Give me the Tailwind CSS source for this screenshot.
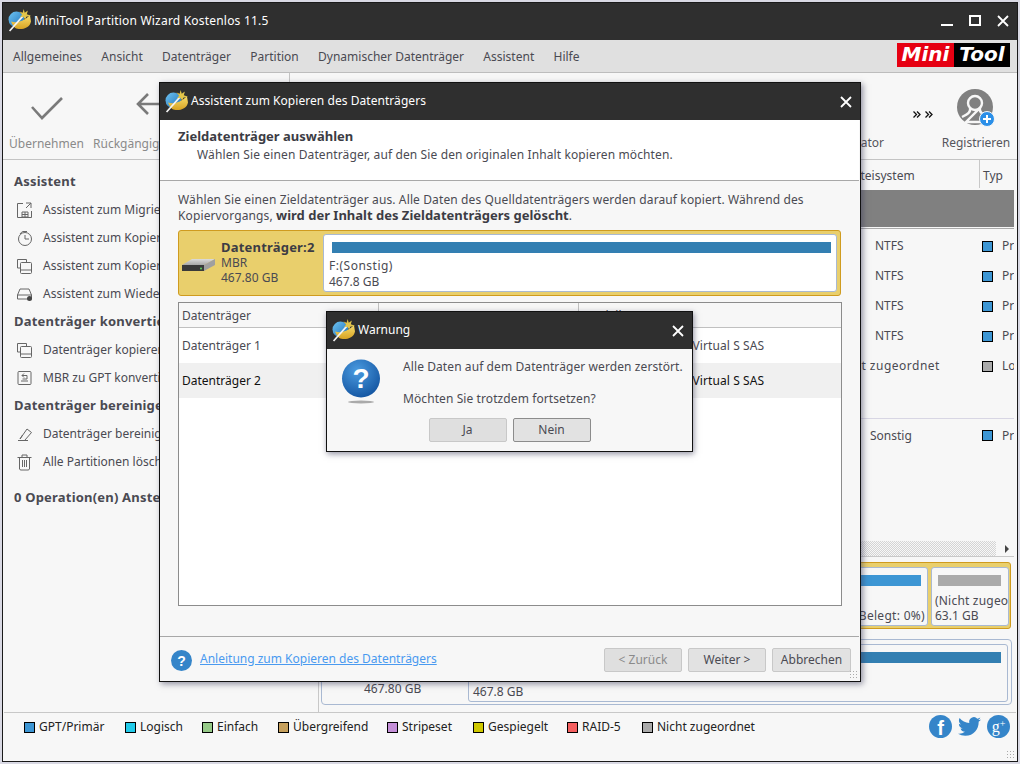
<!DOCTYPE html>
<html lang="de">
<head>
  <meta charset="UTF-8">
  <title>MiniTool Partition Wizard</title>
  <script src="https://cdn.jsdelivr.net/npm/@tailwindcss/browser@4"></script>
</head>
<body class="w-[1020px] h-[764px] overflow-hidden bg-[#d9d9e4] font-['Noto_Sans',sans-serif] text-[12px] text-[#4a4a52]">

  <svg class="absolute w-0 h-0">
    <defs>
      <linearGradient id="ball" x1="0" y1="0" x2="1" y2="1"><stop offset="0" stop-color="#6fc4f2"/><stop offset="1" stop-color="#1c6fb8"/></linearGradient>
      <linearGradient id="bowl" x1="0" y1="0" x2="0" y2="1"><stop offset="0" stop-color="#f8dd6c"/><stop offset="1" stop-color="#d6a222"/></linearGradient>
      <radialGradient id="qball" cx="0.4" cy="0.3" r="0.8"><stop offset="0" stop-color="#4a9be0"/><stop offset="1" stop-color="#0f4f9c"/></radialGradient>
      <linearGradient id="hdd" x1="0" y1="0" x2="0" y2="1"><stop offset="0" stop-color="#dcdcdc"/><stop offset="1" stop-color="#a8a8a8"/></linearGradient>
      <symbol id="app" viewBox="0 0 22 22">
        <circle cx="8" cy="10" r="7.500" fill="url(#ball)"/>
        <path d="M3 12 C8 14 15 12 21 6 L22 12 C21 18 14 20 9 19 C6 18.500 4 15 3 12Z" fill="url(#bowl)"/>
        <path d="M1.500 21 L14 7" stroke="#f4f4f4" stroke-width="1.600"/>
        <path d="M15 0 L16 3.500 L19 1.500 L18 5 L22 6.500 L17.500 7.500 L16.500 10 L14.500 7.500 L11.500 8 L13.500 5.500 L11 2.500 L14 3.500Z" fill="#e2c54a"/>
      </symbol>
    </defs>
  </svg>

  <!-- main window -->
  <div class="relative ml-[2px] mt-[2px] w-[1016px] h-[760px] border border-[#1a1a1a] bg-[#f7f7f7] flex flex-col">

    <header class="h-[37px] shrink-0 bg-[#2f2f2f] flex items-center pl-[5px] text-white">
      <svg class="w-[23px] h-[23px] -mt-[2px]"><use href="#app"/></svg>
      <span class="ml-[3px] -mt-[1px] tracking-[0.2px]">MiniTool Partition Wizard Kostenlos 11.5</span>
      <div class="ml-auto mb-[2px] flex items-center">
        <div class="w-[12px] h-[2px] bg-white mt-[8px]"></div>
        <div class="ml-[16px] w-[12px] h-[11px] border-2 border-white"></div>
        <svg class="ml-[16px] mr-[8px] w-[12px] h-[12px]" viewBox="0 0 12 12"><path d="M1 1 L11 11 M11 1 L1 11" stroke="#fff" stroke-width="1.800"/></svg>
      </div>
    </header>

    <nav class="h-[33px] shrink-0 bg-[#e0e0e0] border-b border-[#bdbdbd] flex items-center pl-[10px] gap-[19.300px] text-[#4a4a52]">
      <span class="mt-[2px]">Allgemeines</span><span class="mt-[2px]">Ansicht</span><span class="mt-[2px]">Datenträger</span><span class="mt-[2px]">Partition</span><span class="mt-[2px]">Dynamischer Datenträger</span><span class="mt-[2px]">Assistent</span><span class="mt-[2px]">Hilfe</span>
      <div class="ml-auto mr-[7px] flex h-[24px] mb-[3px] font-['DejaVu_Sans',sans-serif] font-bold italic text-[20px] leading-[23px] text-white">
        <span class="w-[57px] bg-[#e60012] text-center">Mini</span>
        <span class="w-[56px] bg-black text-center">Tool</span>
      </div>
    </nav>

    <!-- toolbar -->
    <div class="relative h-[87px] shrink-0 border-b border-[#c4c4c4] flex text-[#8a8a8a]">
      <div class="w-[85px] flex flex-col items-center pt-[23px]">
        <svg class="w-[34px] h-[24px] ml-[2px]" viewBox="0 0 34 24"><path d="M2 11 L12 22 L32 2" fill="none" stroke="#7a7a7a" stroke-width="2.600"/></svg>
        <span class="mt-[15px] ml-[2px]">Übernehmen</span>
      </div>
      <div class="w-[80px] flex flex-col pt-[19px] pl-[5px]">
        <svg class="ml-[43px] w-[26px] h-[24px]" viewBox="0 0 26 24"><path d="M12 2 L2 12 L12 22 M2 12 L26 12" fill="none" stroke="#7a7a7a" stroke-width="2.600"/></svg>
        <span class="mt-[19px] whitespace-nowrap">Rückgängig</span>
      </div>
      <div class="absolute left-[286px] top-0 h-[87px] w-px bg-[#c4c4c4]"></div>
      <div class="ml-auto flex">
        <span class="self-end mb-[7px] w-[73px] flex justify-end whitespace-nowrap text-[#55555c]">Speicherplatz-Analysator</span>
        <div class="w-[51px] pr-[2px] flex items-start justify-end gap-[4px] pt-[38px]">
          <svg class="w-[8px] h-[7px]" viewBox="0 0 8 7" fill="none" stroke="#111" stroke-width="1.300"><path d="M.500 .500L3.500 3.500L.500 6.500M4 .500L7 3.500L4 6.500"/></svg>
          <svg class="w-[8px] h-[7px]" viewBox="0 0 8 7" fill="none" stroke="#111" stroke-width="1.300"><path d="M.500 .500L3.500 3.500L.500 6.500M4 .500L7 3.500L4 6.500"/></svg>
        </div>
        <div class="w-[82px] flex flex-col items-center pt-[16px] text-[#55555c]">
          <svg class="w-[38px] h-[38px]" viewBox="0 0 38 38">
            <circle cx="18" cy="18" r="18" fill="#808080"/>
            <circle cx="18" cy="14" r="7" fill="none" stroke="#f7f7f7" stroke-width="2.400"/>
            <path d="M13 19 C14 23 11 25 5 28 M23 19 C22 23 25 25 31 28 L27 33 L9 33 Z" fill="none" stroke="#f7f7f7" stroke-width="2.400"/>
            <circle cx="30" cy="30" r="7.500" fill="#2b8fe8" stroke="#f7f7f7" stroke-width="1"/>
            <path d="M30 26 V34 M26 30 H34" stroke="#fff" stroke-width="2"/>
          </svg>
          <span class="mt-[7px]">Registrieren</span>
        </div>
      </div>
    </div>

    <div class="flex h-[552px] shrink-0">
      <!-- sidebar -->
      <aside class="w-[316px] shrink-0 border-r border-[#c8c8c8] pt-[8px] pl-[11px] overflow-hidden whitespace-nowrap">
        <div class="h-[28px] flex items-center font-bold text-[13px] tracking-[0.2px]">Assistent</div>
        <div class="h-[28px] flex items-center gap-[11px] pl-[3px]">
          <svg class="w-[15px] h-[16px]" viewBox="0 0 15 16" fill="none" stroke="#666"><path d="M6 1.500H.500V15.500H14.500V9M9 1H14V6M14 1L9 6"/><path d="M5 10h6v5H5zM8 10v5M5 12.500h6"/></svg>
          <span>Assistent zum Migrieren von OS auf SSD/HD</span>
        </div>
        <div class="h-[28px] flex items-center gap-[11px] pl-[3px]">
          <svg class="w-[15px] h-[16px]" viewBox="0 0 15 16" fill="none" stroke="#666"><circle cx="8" cy="9" r="6.500"/><path d="M8 5V9H12M3 4A6 6 0 0 1 6 1.500H10"/></svg>
          <span>Assistent zum Kopieren der Partition</span>
        </div>
        <div class="h-[28px] flex items-center gap-[11px] pl-[3px]">
          <svg class="w-[15px] h-[16px]" viewBox="0 0 15 16" fill="none" stroke="#666"><path d="M3 10H.500V1.500H9.500V4"/><rect x="3.500" y="4.500" width="11" height="11" rx="1"/><path d="M3.500 12H14.500"/></svg>
          <span>Assistent zum Kopieren des Datenträgers</span>
        </div>
        <div class="h-[28px] flex items-center gap-[11px] pl-[3px]">
          <svg class="w-[15px] h-[16px]" viewBox="0 0 15 16" fill="none" stroke="#666"><path d="M.500 9L3 3H12L14.500 9V13H.500Z M.500 9H14.500"/><circle cx="12.500" cy="12.500" r="2.500" fill="#444" stroke="none"/></svg>
          <span>Assistent zum Wiederherstellen der Partition</span>
        </div>
        <div class="h-[28px] flex items-center font-bold text-[13px] tracking-[0.2px]">Datenträger konvertieren</div>
        <div class="h-[28px] flex items-center gap-[11px] pl-[3px]">
          <svg class="w-[15px] h-[16px]" viewBox="0 0 15 16" fill="none" stroke="#666"><path d="M3 10H.500V1.500H9.500V4"/><rect x="3.500" y="4.500" width="11" height="11" rx="1"/><path d="M3.500 12H14.500"/></svg>
          <span>Datenträger kopieren</span>
        </div>
        <div class="h-[28px] flex items-center gap-[11px] pl-[3px]">
          <svg class="w-[15px] h-[16px]" viewBox="0 0 15 16" fill="none" stroke="#666"><rect x="1" y="1.500" width="13" height="13" rx="1"/><path d="M4 11H11M5 5.500H10V9H5.500M5 5.500L7 3.500M5 5.500L7 7.500"/></svg>
          <span>MBR zu GPT konvertieren</span>
        </div>
        <div class="h-[28px] flex items-center font-bold text-[13px] tracking-[0.2px]">Datenträger bereinigen</div>
        <div class="h-[28px] flex items-center gap-[11px] pl-[3px]">
          <svg class="w-[15px] h-[16px]" viewBox="0 0 15 16" fill="none" stroke="#666"><path d="M1 14.500H11M3 13L10 3L14.500 6.500L8 14M3 13L5.500 9"/></svg>
          <span>Datenträger bereinigen</span>
        </div>
        <div class="h-[28px] flex items-center gap-[11px] pl-[3px]">
          <svg class="w-[15px] h-[17px]" viewBox="0 0 15 17" fill="none" stroke="#666"><path d="M.500 3.500H14.500M5 3V1H10V3M2.500 4V15A1.500 1.500 0 0 0 4 16H11A1.500 1.500 0 0 0 12.500 15V4M5.500 6V13M7.500 6V13M9.500 6V13"/></svg>
          <span>Alle Partitionen löschen</span>
        </div>
        <div class="mt-[8px] h-[28px] flex items-center font-bold text-[13px] tracking-[0.2px]">0 Operation(en) Anstehend</div>
      </aside>

      <!-- partition list and disk map, mostly behind the dialog -->
      <main class="w-[695px] shrink-0 flex flex-col whitespace-nowrap overflow-hidden">
        <div class="h-[28px] shrink-0 flex items-center pl-[526px]">
          <span class="w-[134px] shrink-0 pt-[4px]">Dateisystem</span>
          <span class="pl-[3px] h-[28px] leading-[32px] border-l border-[#c8c8c8]">Typ</span>
        </div>
        <div class="mt-[2px] h-[37px] shrink-0 bg-[#808080]"></div>
        <div class="mt-[1px] h-[1px] shrink-0 bg-[#aaaaaa]"></div>
        <div class="mt-[2px] h-[30px] shrink-0 flex items-center pl-[556px]"><span class="w-[107px] shrink-0">NTFS</span><span class="w-[11px] h-[11px] shrink-0 bg-[#3d96d4] border border-black"></span><span class="ml-[9px]">Primär</span></div>
        <div class="h-[30px] shrink-0 flex items-center pl-[556px]"><span class="w-[107px] shrink-0">NTFS</span><span class="w-[11px] h-[11px] shrink-0 bg-[#3d96d4] border border-black"></span><span class="ml-[9px]">Primär</span></div>
        <div class="h-[30px] shrink-0 flex items-center pl-[556px]"><span class="w-[107px] shrink-0">NTFS</span><span class="w-[11px] h-[11px] shrink-0 bg-[#3d96d4] border border-black"></span><span class="ml-[9px]">Primär</span></div>
        <div class="h-[30px] shrink-0 flex items-center pl-[556px]"><span class="w-[107px] shrink-0">NTFS</span><span class="w-[11px] h-[11px] shrink-0 bg-[#3d96d4] border border-black"></span><span class="ml-[9px]">Primär</span></div>
        <div class="h-[30px] shrink-0 flex items-center pl-[515px]"><span class="w-[148px] shrink-0 tracking-[0.5px]">Nicht zugeordnet</span><span class="w-[11px] h-[11px] shrink-0 bg-[#aaaaaa] border border-black"></span><span class="ml-[9px]">Logisch</span></div>
        <div class="mt-[37px] h-[1px] shrink-0 bg-[#d8d6e4]"></div>
        <div class="h-[33px] shrink-0 flex items-center pl-[551px]"><span class="w-[112px] shrink-0">Sonstig</span><span class="w-[11px] h-[11px] shrink-0 bg-[#3d96d4] border border-black"></span><span class="ml-[9px]">Primär</span></div>
        <!-- scrollbar -->
        <div class="mt-[89px] h-[16px] shrink-0 border-b border-[#c8c8c8] flex items-center">
          <div class="w-[677px] h-[15px] shrink-0 bg-[repeating-conic-gradient(#d4d4d4_0%_25%,#f7f7f7_0%_50%)] bg-[length:2px_2px]"></div>
          <div class="ml-[9px] w-0 h-0 border-y-[4px] border-y-transparent border-l-[4px] border-l-[#444]"></div>
        </div>
        <!-- disk 1 -->
        <div class="mt-[5px] ml-[1px] w-[691px] h-[67px] shrink-0 bg-[#e9cf6c] border border-[#cf9b1f] rounded-[3px] flex pt-[4px] pb-[2px] pl-[4px] pr-[2px] gap-[3px]">
          <div class="w-[603px] shrink-0 bg-[#f7f7f7] border border-[#a9b9d2] rounded-[3px] pt-[7px] pl-[7px] pr-[6px] text-right"><div class="h-[11px] bg-[#3d96d4]"></div><div class="mt-[22px] mr-[-4px] leading-[15px] tracking-[0.3px]">(Belegt: 0%)</div></div>
          <div class="w-[78px] shrink-0 overflow-hidden bg-[#f7f7f7] border border-[#a9b9d2] rounded-[3px] pt-[7px] pl-[3px]"><div class="ml-[3px] mr-[7px] h-[11px] bg-[#aaaaaa]"></div><div class="mt-[7px] leading-[15px] tracking-[0.2px]">(Nicht zugeordnet)</div><div class="leading-[15px]">63.1 GB</div></div>
        </div>
        <!-- disk 2 -->
        <div class="mt-[10px] ml-[2px] w-[691px] h-[66px] shrink-0 border border-[#a9b9d2] rounded-[4px] flex">
          <div class="w-[146px] shrink-0 pt-[41px] pl-[42px] leading-[16px]">467.80 GB</div>
          <div class="flex-1 border border-[#a9b9d2] rounded-[3px] mt-[4px] mr-[3px] mb-[2px] pt-[7px] pl-[4px] pr-[6px]"><div class="h-[11px] bg-[#337fb2]"></div><div class="mt-[21px] leading-[16px]">467.8 GB</div></div>
        </div>
      </main>
    </div>

    <footer class="flex-1 border-t border-[#c8c8c8] mx-px pt-[7px] pl-[20px] flex items-start text-[#222]">
      <div class="w-[101px] flex items-center h-[14px]"><span class="w-[11px] h-[11px] bg-[#3d96d4] border border-black"></span><span class="ml-[4px]">GPT/Primär</span></div>
      <div class="w-[77px] flex items-center h-[14px]"><span class="w-[11px] h-[11px] bg-[#22cbea] border border-black"></span><span class="ml-[4px]">Logisch</span></div>
      <div class="w-[76px] flex items-center h-[14px]"><span class="w-[11px] h-[11px] bg-[#96ca88] border border-black"></span><span class="ml-[4px]">Einfach</span></div>
      <div class="w-[109px] flex items-center h-[14px]"><span class="w-[11px] h-[11px] bg-[#c6a05c] border border-black"></span><span class="ml-[4px]">Übergreifend</span></div>
      <div class="w-[86px] flex items-center h-[14px]"><span class="w-[11px] h-[11px] bg-[#c48fd8] border border-black"></span><span class="ml-[4px]">Stripeset</span></div>
      <div class="w-[94px] flex items-center h-[14px]"><span class="w-[11px] h-[11px] bg-[#cfc800] border border-black"></span><span class="ml-[4px]">Gespiegelt</span></div>
      <div class="w-[75px] flex items-center h-[14px]"><span class="w-[11px] h-[11px] bg-[#f56060] border border-black"></span><span class="ml-[4px]">RAID-5</span></div>
      <div class="flex items-center h-[14px]"><span class="w-[11px] h-[11px] bg-[#aaaaaa] border border-black"></span><span class="ml-[4px]">Nicht zugeordnet</span></div>
      <div class="ml-auto mr-[6px] -mt-[5px] flex items-center gap-[6px]">
        <div class="w-[23px] h-[23px] rounded-full bg-[#3585c9] flex items-center justify-center text-white font-['Liberation_Sans',sans-serif] font-bold text-[20px] leading-none pt-[3px]">f</div>
        <svg class="w-[23px] h-[23px]" viewBox="0 0 24 24"><path fill="#3585c9" d="M23.953 4.570a10 10 0 01-2.825.775 4.958 4.958 0 002.163-2.723c-.951.555-2.005.959-3.127 1.184a4.920 4.920 0 00-8.384 4.482C7.690 8.095 4.067 6.130 1.640 3.162a4.822 4.822 0 00-.666 2.475c0 1.710.870 3.213 2.188 4.096a4.904 4.904 0 01-2.228-.616v.060a4.923 4.923 0 003.946 4.827 4.996 4.996 0 01-2.212.085 4.936 4.936 0 004.604 3.417 9.867 9.867 0 01-6.102 2.105c-.390 0-.779-.023-1.170-.067a13.995 13.995 0 007.557 2.209c9.053 0 13.998-7.496 13.998-13.985 0-.210 0-.420-.015-.630A9.935 9.935 0 0024 4.590z"/></svg>
        <div class="w-[23px] h-[23px] rounded-full bg-[#3585c9] flex items-center justify-center text-white font-['Liberation_Serif',serif] text-[16px] leading-none">g<span class="text-[10px] -mt-[6px]">+</span></div>
      </div>
      <div class="absolute right-[2px] bottom-[2px] w-[9px] h-[9px] bg-[radial-gradient(#aaaaaa_1px,transparent_1px)] bg-[length:3px_3px]"></div>
    </footer>

    <!-- copy disk wizard dialog -->
    <section class="absolute left-[156px] top-[79px] w-[702px] h-[600px] border border-[#111] bg-[#f7f7f7] shadow-[2px_2px_6px_rgba(60,60,90,0.55)] flex flex-col">
      <div class="h-[37px] shrink-0 bg-[#2f2f2f] flex items-center pl-[5px] text-white">
        <svg class="w-[23px] h-[23px]"><use href="#app"/></svg>
        <span class="ml-[3px] -mt-[1px] tracking-[0.05px]">Assistent zum Kopieren des Datenträgers</span>
        <svg class="ml-auto mr-[8px] w-[12px] h-[12px]" viewBox="0 0 12 12"><path d="M1 1 L11 11 M11 1 L1 11" stroke="#fff" stroke-width="1.800"/></svg>
      </div>
      <div class="h-[61px] shrink-0 bg-white border-b border-[#a8a8a8] mr-px pt-[7px] pl-[18px] leading-[18px]">
        <div class="font-bold text-[13px] text-[#3c3c44]">Zieldatenträger auswählen</div>
        <div class="pl-[19px] mt-[1px] tracking-[0.12px]">Wählen Sie einen Datenträger, auf den Sie den originalen Inhalt kopieren möchten.</div>
      </div>
      <div class="pt-[11px] pl-[18px] leading-[16px] tracking-[0.12px]">
        <p>Wählen Sie einen Zieldatenträger aus. Alle Daten des Quelldatenträgers werden darauf kopiert. Während des</p>
        <p class="-mt-[1px]">Kopiervorgangs, <b class="text-[13px] tracking-normal text-[#3c3c44]">wird der Inhalt des Zieldatenträgers gelöscht</b>.</p>
      </div>
      <div class="mt-[6px] ml-[18px] w-[663px] h-[66px] shrink-0 bg-[#e9cf6c] border border-[#cf9b1f] rounded-[3px] flex">
        <svg class="mt-[27px] ml-[3px] w-[33px] h-[15px]" viewBox="0 0 33 15">
          <path d="M0 7 L10 1 H33 L22 7Z" fill="url(#hdd)"/><path d="M22 7 L33 1 V7 L22 13Z" fill="#a0a0a0"/><path d="M0 7 H22 V13 H0Z" fill="#3a3a3a"/><circle cx="19" cy="10.500" r="1" fill="#5fd35f"/>
        </svg>
        <div class="ml-[6px] w-[102px] pt-[9px] leading-[15px]">
          <div class="font-bold text-[13px] tracking-[0.2px] text-[#3c3c44]">Datenträger:2</div><div>MBR</div><div class="leading-[16px]">467.80 GB</div>
        </div>
        <div class="mt-[3px] w-[514px] h-[58px] bg-white border border-[#a9b9d2] rounded-[3px] pt-[7px] pl-[5px]">
          <div class="ml-[3px] mr-[5px] h-[11px] bg-[#337fb2]"></div>
          <div class="mt-[5px] leading-[16px] tracking-[0.5px]">F:(Sonstig)</div><div class="leading-[16px]">467.8 GB</div>
        </div>
      </div>
      <div class="mt-[6px] ml-[18px] w-[664px] h-[304px] shrink-0 border border-[#8c8c8c] bg-white whitespace-nowrap">
        <div class="h-[25px] bg-[#f7f7f7] border-b border-[#c0c0c0] flex items-center">
          <span class="w-[200px] h-full leading-[25px] pl-[3px] border-r border-[#c0c0c0]">Datenträger</span>
          <span class="w-[200px] h-full border-r border-[#c0c0c0]"></span>
          <span class="pl-[4px] leading-[25px]">Modell</span>
        </div>
        <div class="h-[35px] flex items-center"><span class="w-[400px] pl-[3px]">Datenträger 1</span><span class="pl-[11px] tracking-[0.1px]">VMware, VMware Virtual S SAS</span></div>
        <div class="h-[35px] flex items-center bg-[#f0f0f0] text-[#111]"><span class="w-[400px] pl-[3px]">Datenträger 2</span><span class="pl-[11px] tracking-[0.1px]">VMware, VMware Virtual S SAS</span></div>
      </div>
      <div class="mt-[30px] mr-px h-[46px] shrink-0 border-t border-[#a8a8a8] flex items-center pl-[11px]">
        <svg class="w-[21px] h-[21px] mt-[1px]" viewBox="0 0 21 21"><circle cx="10.500" cy="10.500" r="10.500" fill="#3585c9"/><text x="10.500" y="15.500" text-anchor="middle" font-size="14" font-weight="700" fill="#fff" font-family="Liberation Sans">?</text></svg>
        <a class="ml-[8px] -mt-[1px] text-[#4a9af0] underline">Anleitung zum Kopieren des Datenträgers</a>
        <div class="ml-auto mr-[8px] mt-[1px] flex gap-[6px]">
          <button class="w-[78px] h-[24px] bg-[#dfdfdf] border border-[#c8c8c8] rounded-[2px] text-[#8a8a8a]">&lt; Zurück</button>
          <button class="w-[78px] h-[24px] bg-[#e2e2e2] border border-[#c8c8c8] rounded-[2px]">Weiter &gt;</button>
          <button class="w-[79px] h-[24px] bg-[#e2e2e2] border border-[#c8c8c8] rounded-[2px]">Abbrechen</button>
        </div>
      </div>
      <div class="absolute right-[2px] bottom-[2px] w-[9px] h-[9px] bg-[radial-gradient(#aaaaaa_1px,transparent_1px)] bg-[length:3px_3px]"></div>
    </section>

    <!-- warning dialog -->
    <section class="absolute left-[323px] top-[308px] w-[367px] h-[141px] border border-[#111] bg-[#f7f7f7] shadow-[1px_2px_6px_rgba(60,60,90,0.55)] flex flex-col">
      <div class="h-[37px] shrink-0 bg-[#2f2f2f] flex items-center pl-[5px] text-white">
        <svg class="w-[23px] h-[23px]"><use href="#app"/></svg>
        <span class="ml-[3px] -mt-[1px]">Warnung</span>
        <svg class="ml-auto mr-[8px] w-[12px] h-[12px]" viewBox="0 0 12 12"><path d="M1 1 L11 11 M11 1 L1 11" stroke="#fff" stroke-width="1.800"/></svg>
      </div>
      <div class="flex">
        <div class="w-[76px] pl-[14px] pt-[10px] shrink-0">
          <svg class="w-[40px] h-[46px]" viewBox="0 0 40 46">
            <ellipse cx="20" cy="43" rx="13" ry="1.500" fill="#aaaaaa"/>
            <circle cx="20" cy="19.500" r="19" fill="url(#qball)"/>
            <text x="20" y="29" text-anchor="middle" font-size="28" font-weight="700" fill="#fff" font-family="Liberation Sans">?</text>
          </svg>
        </div>
        <div class="pt-[10px] leading-[16px] tracking-[0.09px]">
          <p class="whitespace-nowrap">Alle Daten auf dem Datenträger werden zerstört.</p>
          <p class="mt-[16px]">Möchten Sie trotzdem fortsetzen?</p>
        </div>
      </div>
      <div class="mt-[11px] flex justify-center gap-[6px]">
        <button class="w-[78px] h-[24px] bg-[#dfdfdf] border border-[#c8c8c8] rounded-[2px]">Ja</button>
        <button class="w-[78px] h-[24px] bg-[#e2e2e2] border border-[#8c8c8c] rounded-[2px]">Nein</button>
      </div>
    </section>
  </div>
</body>
</html>
